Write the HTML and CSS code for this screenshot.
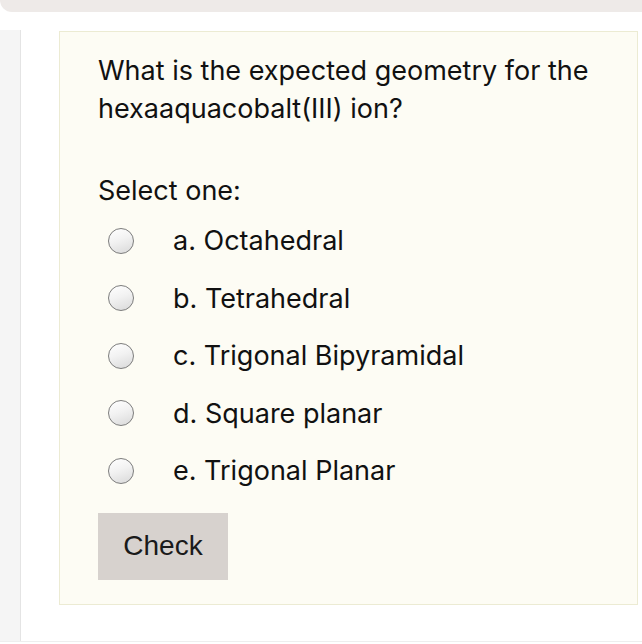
FILE: index.html
```html
<!DOCTYPE html>
<html>
<head>
<meta charset="utf-8">
<link rel="stylesheet" href="styles.css">
</head>
<body>
<div class="topbar"></div>
<div class="main">
  <div class="rail"></div>
  <div class="content">
    <div class="card">
      <p class="question">What is the expected geometry for the hexaaquacobalt(III) ion?</p>
      <p class="prompt">Select one:</p>
      <div class="options">
        <label class="option"><span class="radio"></span><span class="text">a. Octahedral</span></label>
        <label class="option"><span class="radio"></span><span class="text">b. Tetrahedral</span></label>
        <label class="option"><span class="radio"></span><span class="text">c. Trigonal Bipyramidal</span></label>
        <label class="option"><span class="radio"></span><span class="text">d. Square planar</span></label>
        <label class="option"><span class="radio"></span><span class="text">e. Trigonal Planar</span></label>
      </div>
      <button class="check">Check</button>
    </div>
  </div>
</div>
</body>
</html>
```
FILE: styles.css
```css
html, body {
  margin: 0;
  padding: 0;
  background: #ffffff;
}
body {
  width: 642px;
  height: 644px;
  overflow: hidden;
  font-family: "Inter", "Roboto", "Liberation Sans", sans-serif;
  color: #111111;
}
.topbar {
  height: 12px;
  background: #eeeae8;
  border-bottom-left-radius: 14px;
}
.main {
  display: flex;
  margin-top: 18px;
  height: 611px;
  border-bottom: 1px solid #eeeeee;
}
.rail {
  width: 20px;
  background: #f5f5f5;
  border-right: 1px solid #e4e4e4;
}
.content {
  flex: 1;
  padding-left: 38px;
  padding-top: 1px;
  padding-right: 4px;
}
.card {
  background: #fdfcf4;
  border: 1px solid #ecebd3;
  height: 574px;
  box-sizing: border-box;
  padding: 20px 0 0 38px;
}
.question {
  margin: 0;
  font-size: 27px;
  line-height: 38px;
  width: 520px;
}
.prompt {
  margin: 44px 0 0 0;
  font-size: 27px;
  line-height: 38px;
}
.options {
  display: flex;
  flex-direction: column;
  margin-top: 2px;
}
.option {
  display: flex;
  align-items: center;
  height: 57.5px;
}
.radio {
  width: 24px;
  height: 24px;
  border-radius: 50%;
  border: 1.5px solid #7c7c7c;
  background: linear-gradient(160deg, #ffffff 0%, #f2f2f2 45%, #d9d9d9 100%);
  margin-left: 10px;
  flex: none;
}
.text {
  margin-left: 39px;
  font-size: 27px;
}
.check {
  margin-top: 13px;
  width: 130px;
  height: 67px;
  background: #d7d2ce;
  border: none;
  border-radius: 0;
  font-family: "Liberation Sans", Arial, sans-serif;
  font-size: 28px;
  color: #1a1a1a;
  padding: 0;
}
```
